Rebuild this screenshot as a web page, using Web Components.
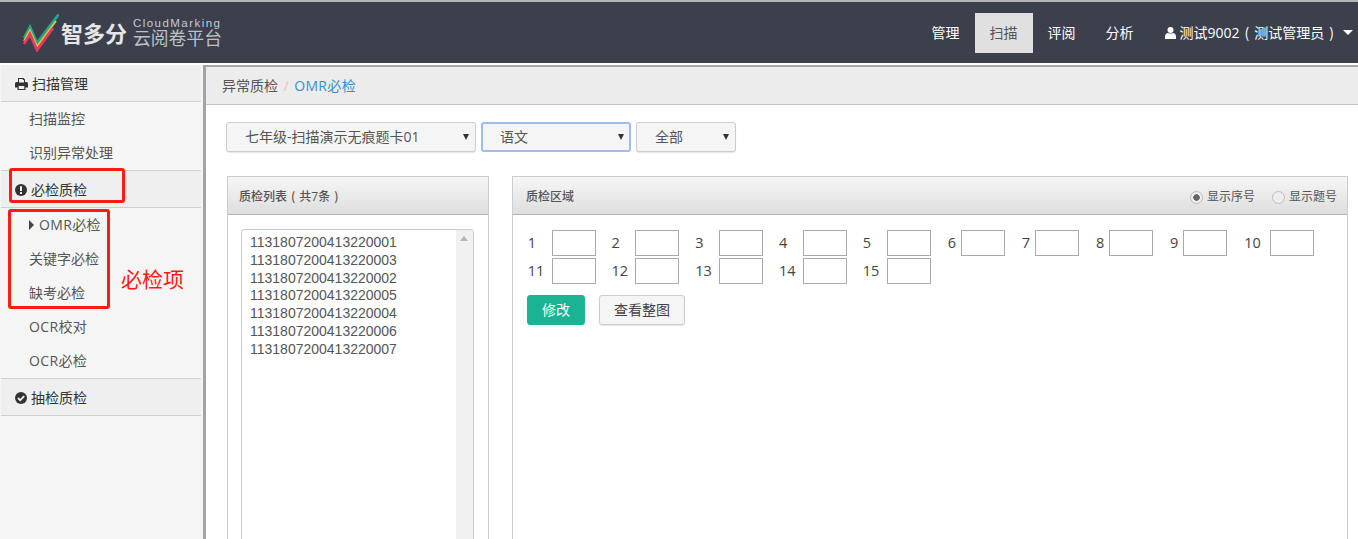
<!DOCTYPE html>
<html lang="zh-CN">

<head>
    <meta charset="UTF-8">
    <title>OMR必检</title>
    <style>
        html, body {
            margin: 0;
            height: 100%;
            overflow: hidden;
        }
        body {
            font: 14px/20px "Open Sans", "Noto Sans CJK SC", sans-serif;
            color: #555;
            background: #fff;
        }
        .layout {
            display: flex;
            height: 474px;
        }
        .numbers {
            display: flex;
            flex-wrap: wrap;
            row-gap: 2px;
            width: 807px;
        }
        .tools {
            display: flex;
            gap: 14px;
            margin-top: 11px;
        }
    </style>
</head>

<body>
    <zf-header>
        <zf-nav-item>管理</zf-nav-item>
        <zf-nav-item active>扫描</zf-nav-item>
        <zf-nav-item>评阅</zf-nav-item>
        <zf-nav-item>分析</zf-nav-item>
    </zf-header>
    <div class="layout">
        <zf-sidebar>
            <zf-side-head icon="print" first>扫描管理</zf-side-head>
            <zf-side-item>扫描监控</zf-side-item>
            <zf-side-item>识别异常处理</zf-side-item>
            <zf-side-head icon="alert">必检质检</zf-side-head>
            <zf-side-item current style="letter-spacing:.35px">OMR必检</zf-side-item>
            <zf-side-item>关键字必检</zf-side-item>
            <zf-side-item>缺考必检</zf-side-item>
            <zf-side-item style="letter-spacing:.35px">OCR校对</zf-side-item>
            <zf-side-item style="letter-spacing:.35px">OCR必检</zf-side-item>
            <zf-side-head icon="check">抽检质检</zf-side-head>
        </zf-sidebar>
        <zf-main>
            <zf-select style="--w:250px">七年级-扫描演示无痕题卡01</zf-select>
            <zf-select style="--w:150px" focused>语文</zf-select>
            <zf-select style="--w:100px">全部</zf-select>
            <zf-panel slot="left" style="--w:262px;--head-pad:11px;--body-pad:13px;--body-top:14px" heading="质检列表（共7条）">
                <zf-listbox>
                    <div>1131807200413220001</div>
                    <div>1131807200413220003</div>
                    <div>1131807200413220002</div>
                    <div>1131807200413220005</div>
                    <div>1131807200413220004</div>
                    <div>1131807200413220006</div>
                    <div>1131807200413220007</div>
                </zf-listbox>
            </zf-panel>
            <zf-panel slot="right" style="--w:836px;--head-pad:13px;--body-pad:14px;--body-top:15px" heading="质检区域">
                <zf-radio slot="actions" checked>显示序号</zf-radio>
                <zf-radio slot="actions">显示题号</zf-radio>
                <div class="numbers">
                    <zf-num size="wide">1</zf-num>
                    <zf-num size="wide">2</zf-num>
                    <zf-num size="wide">3</zf-num>
                    <zf-num size="wide">4</zf-num>
                    <zf-num size="wide">5</zf-num>
                    <zf-num>6</zf-num>
                    <zf-num>7</zf-num>
                    <zf-num>8</zf-num>
                    <zf-num>9</zf-num>
                    <zf-num size="ten">10</zf-num>
                    <zf-num size="wide">11</zf-num>
                    <zf-num size="wide">12</zf-num>
                    <zf-num size="wide">13</zf-num>
                    <zf-num size="wide">14</zf-num>
                    <zf-num size="wide">15</zf-num>
                </div>
                <div class="tools">
                    <zf-btn primary>修改</zf-btn>
                    <zf-btn>查看整图</zf-btn>
                </div>
            </zf-panel>
        </zf-main>
    </div>

    <script>
        const ICONS = {
            print: '<svg width="13" height="12" viewBox="0 0 13 12"><path fill="#333" fill-rule="evenodd" d="M3 0h5.500L10 1.500V4h1.500A1.500 1.500 0 0 1 13 5.500V9.500h-2.500V12h-8V9.500H0V5.500A1.500 1.500 0 0 1 1.500 4H3ZM4 1v3.500h5V2H7.800V1ZM3.700 8v3h5.600V8Z"/></svg>',
            alert: '<svg width="12" height="12" viewBox="0 0 12 12"><circle cx="6" cy="6" r="6" fill="#333"/><rect x="5" y="2.200" width="2" height="4.800" fill="#f0f0f0"/><rect x="5" y="8" width="2" height="2" fill="#f0f0f0"/></svg>',
            check: '<svg width="12" height="12" viewBox="0 0 12 12"><circle cx="6" cy="6" r="6" fill="#333"/><path d="M3 6l2.200 2.200L9.200 4.200" fill="none" stroke="#f0f0f0" stroke-width="1.800"/></svg>'
        };

        function define(name, css, html) {
            customElements.define(name, class extends HTMLElement {
                constructor() {
                    super();
                    this.attachShadow({ mode: 'open' });
                }
                connectedCallback() {
                    this.shadowRoot.innerHTML = `<style>${css}</style>${typeof html === 'function' ? html(this) : html}`;
                }
            });
        }

        // 全角括号在参考图里是居中的，这里用 pwid 加左右留白
        const paren = s => s.replace(/[（）]/g, c => `<span class="p">${c}</span>`);

        define('zf-header', `
            :host { display: block; height: 65px; box-sizing: border-box; border-top: 2px solid #b4b4b4; background: #fff; }
            .bar { display: flex; align-items: center; height: 61px; background: #3c3f4c; padding-right: 5px; }
            .logo { display: flex; align-items: center; margin-left: 23px; }
            .brand { color: #e6e6e6; font-size: 22px; line-height: 30px; font-weight: 700; margin-left: 2px; }
            .sub { margin: 2px 0 0 6px; color: #c9cad0; }
            .sub div:first-child { font: 11.500px/11px "Liberation Sans", sans-serif; letter-spacing: 1.450px; margin-top: -1px; }
            .sub div:last-child { font: 17.800px/18px "Liberation Sans", "Noto Sans CJK SC", sans-serif; margin-top: 1px; color: #bfc0c6; }
            nav { display: flex; align-items: center; margin-left: auto; }
            .user { display: flex; align-items: center; gap: 4px; color: #fff; margin-left: 16px; white-space: nowrap; }
            .caret { width: 0; height: 0; border: 5px solid transparent; border-top: 5px solid #fff; border-bottom: 0; }
            .p { font-feature-settings: "pwid"; padding: 0 5px; }
        `, `
            <div class="bar">
                <div class="logo">
                    <svg width="36" height="38" viewBox="0 0 36 38">
                        <path d="M1 24L7 13L14 29L36 0" fill="none" stroke="#1aa98b" stroke-width="2.800"/>
                        <path d="M1 27L7 16.500L14 32.500L33 7" fill="none" stroke="#e7c13d" stroke-width="2"/>
                        <path d="M1 30L7 20L14 36L30 14" fill="none" stroke="#e8395f" stroke-width="2.800"/>
                    </svg>
                    <span class="brand">智多分</span>
                    <div class="sub"><div>CloudMarking</div><div>云阅卷平台</div></div>
                </div>
                <nav>
                    <slot></slot>
                    <div class="user">
                        <svg width="11" height="12" viewBox="0 0 11 12"><circle cx="5.500" cy="3" r="3" fill="#fff"/><path fill="#fff" d="M0 12V9.500C0 7.500 1.500 6 3 6c1 .8 4 .8 5 0 1.500 0 3 1.500 3 3.500V12Z"/></svg>
                        <span>${paren('测试9002（测试管理员）')}</span><span class="caret"></span>
                    </div>
                </nav>
            </div>
        `);

        define('zf-nav-item', `
            :host { display: block; width: 58px; height: 40px; line-height: 40px; text-align: center; color: #fff; }
            :host([active]) { background: #e0e0e0; color: #555; }
        `, '<slot></slot>');

        define('zf-sidebar', `
            :host { display: block; position: relative; flex: none; width: 203px; border-right: 3px solid #a3a3a3; background: #f5f5f5; }
            .wrap { width: 200px; margin-left: 1px; }
            .mark { position: absolute; border: 3px solid #ff1a14; border-radius: 3px; box-sizing: border-box; }
            .note { position: absolute; left: 121px; top: 201px; color: #ff1a14; font-size: 21px; line-height: 26px; }
        `, `
            <div class="wrap"><slot></slot></div>
            <div class="mark" style="left:9px;top:103px;width:116px;height:35px"></div>
            <div class="mark" style="left:8px;top:144px;width:102px;height:100px"></div>
            <div class="note">必检项</div>
        `);

        define('zf-side-head', `
            :host { display: flex; align-items: center; gap: 4px; height: 35px; padding: 1px 0 0 14px; background: #efefef; border-top: 1px solid #cfcfcf; border-bottom: 1px solid #cfcfcf; color: #333; }
            :host([first]) { height: 34px; padding-top: 2px; border-top: 0; }
            svg { display: block; }
        `, el => `${ICONS[el.getAttribute('icon')]}<slot></slot>`);

        define('zf-side-item', `
            :host { display: flex; align-items: center; height: 34px; padding-left: 28px; color: #555; position: relative; }
            :host([current]) { padding-left: 38px; }
            .tri { position: absolute; left: 28px; top: 12px; border: 5px solid transparent; border-left: 5px solid #444; border-right: 0; }
        `, el => `${el.hasAttribute('current') ? '<span class="tri"></span>' : ''}<slot></slot>`);

        define('zf-main', `
            :host { display: block; flex: 1; min-width: 0; }
            .crumb { height: 40px; line-height: 37px; box-sizing: border-box; padding-left: 16px; background: #ececec; border-top: 2px solid #a6a6a6; border-bottom: 1px solid #c4c4c4; color: #555; }
            .crumb i { font-style: normal; color: #ccc; margin: 0 5.500px; }
            .crumb b { font-weight: 400; color: #3a8fc7; letter-spacing: .35px; }
            .selects { display: flex; gap: 5px; padding: 17px 0 0 20px; }
            .panels { display: flex; gap: 23px; padding: 24px 0 0 21px; }
        `, `
            <div class="crumb">异常质检<i>/</i><b>OMR必检</b></div>
            <div class="selects"><slot></slot></div>
            <div class="panels"><slot name="left"></slot><slot name="right"></slot></div>
        `);

        define('zf-select', `
            :host { display: flex; align-items: center; width: var(--w); height: 30px; box-sizing: border-box; padding: 0 6px 0 18px; background: #f5f5f5; border: 1px solid #ccc; border-radius: 3px; box-shadow: 0 1px 1px rgba(0,0,0,.1); color: #555; white-space: nowrap; }
            :host([focused]) { border: 2px solid #9ebdee; padding-left: 17px; padding-right: 5px; box-shadow: none; }
            .arrow { margin-left: auto; border: 3.500px solid transparent; border-top: 6px solid #333; border-bottom: 0; }
        `, '<slot></slot><span class="arrow"></span>');

        define('zf-panel', `
            :host { display: block; width: var(--w); height: 400px; box-sizing: border-box; border: 1px solid #ccc; flex: none; }
            header { display: flex; align-items: center; height: 34px; padding: 3px 10px 0 var(--head-pad); background: linear-gradient(#f6f6f6, #dedede); border-bottom: 1px solid #b4b4b4; font-size: 12px; font-weight: 500; color: #555; }
            .actions { margin-left: auto; display: flex; gap: 17px; font-weight: 400; }
            .body { padding: var(--body-top) 14px 14px var(--body-pad); }
            .p { font-feature-settings: "pwid"; padding: 0 4px; }
        `, el => `
            <header><span>${paren(el.getAttribute('heading'))}</span><div class="actions"><slot name="actions"></slot></div></header>
            <div class="body"><slot></slot></div>
        `);

        define('zf-radio', `
            :host { display: flex; align-items: center; gap: 4px; font-size: 12px; color: #555; }
            .dot { width: 11px; height: 11px; border-radius: 50%; border: 1px solid #bbb; background: #eee; display: block; }
            :host([checked]) .dot { background: radial-gradient(circle, #666 0 3px, #eee 3.500px); }
        `, '<span class="dot"></span><slot></slot>');

        define('zf-listbox', `
            :host { display: block; position: relative; height: 400px; border: 1px solid #ccc; border-radius: 3px; padding: 4px 8px; font: 14px/17.800px "Liberation Sans", sans-serif; color: #555; }
            .track { position: absolute; right: 0; top: 0; bottom: 0; width: 17px; background: #f0f0f0; }
            .up { position: absolute; left: 4px; top: 6px; border: 4.500px solid transparent; border-bottom: 5px solid #b5b5b5; border-top: 0; }
        `, '<slot></slot><div class="track"><span class="up"></span></div>');

        define('zf-num', `
            :host { display: flex; align-items: center; height: 26px; margin-right: 14.750px; color: #444; font-size: 14.500px; }
            :host([size=wide]) { margin-right: 15.050px; }
            .n { box-sizing: border-box; width: 15.400px; padding-left: 2px; flex: none; }
            :host([size=wide]) .n { width: 24.700px; padding-left: .7px; }
            :host([size=ten]) .n { width: 28px; padding-left: 2px; }
            .box { width: 42px; height: 24px; border: 1px solid #aaa; background: #fff; flex: none; }
        `, '<span class="n"><slot></slot></span><span class="box"></span>');

        define('zf-btn', `
            :host { display: flex; align-items: center; justify-content: center; height: 30px; padding: 0 14px; box-sizing: border-box; background: #f5f5f5; border: 1px solid #ccc; border-radius: 3px; box-shadow: 0 1px 1px rgba(0,0,0,.1); color: #444; }
            :host([primary]) { background: #1ab394; border-color: #1ab394; color: #fff; box-shadow: none; }
        `, '<slot></slot>');
    </script>
</body>

</html>
